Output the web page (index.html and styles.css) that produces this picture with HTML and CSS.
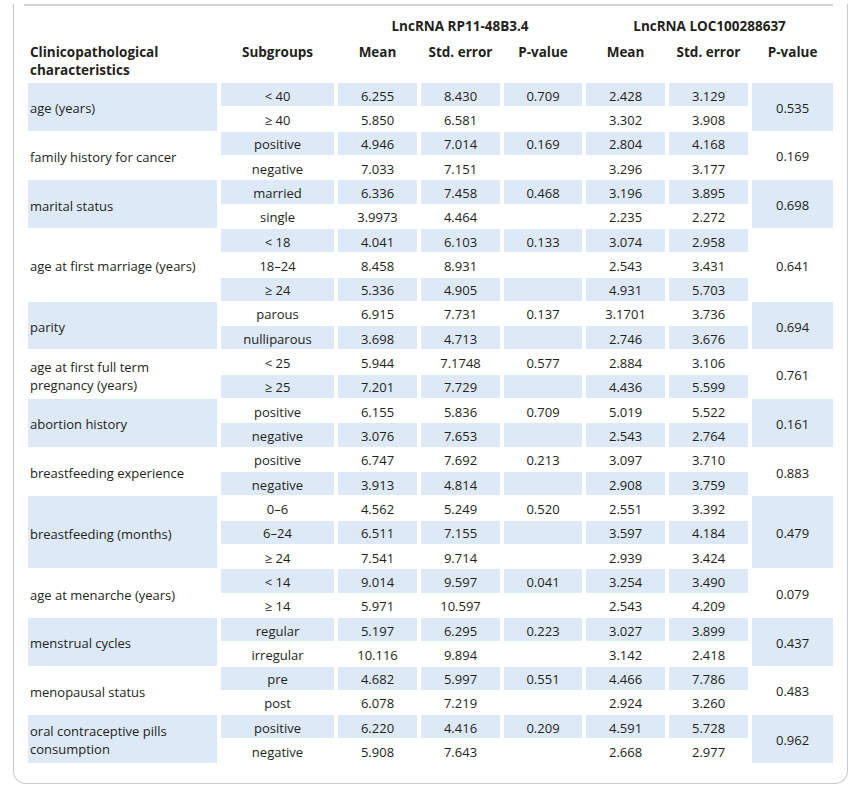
FILE: index.html
```html
<!DOCTYPE html>
<html lang="en">
<head>
    <meta charset="UTF-8">
    <title>Table 2</title>
    <link rel="stylesheet" href="styles.css">
</head>
<body>
    <div class="card">
        <div class="rule"></div>
        <table class="data">
            <colgroup>
                <col class="c-label"><col class="c-sub">
                <col class="c-num"><col class="c-num"><col class="c-num2">
                <col class="c-num"><col class="c-num"><col class="c-last">
            </colgroup>
            <thead>
                <tr class="top">
                    <th></th><th></th>
                    <th colspan="3">LncRNA RP11-48B3.4</th>
                    <th colspan="3">LncRNA LOC100288637</th>
                </tr>
                <tr class="names">
                    <th class="label">Clinicopathological<br>characteristics</th>
                    <th>Subgroups</th>
                    <th>Mean</th><th>Std. error</th><th>P-value</th>
                    <th>Mean</th><th>Std. error</th><th>P-value</th>
                </tr>
            </thead>
            <tbody>
                <!-- age -->
                <tr class="stripe">
                    <td class="label span hl" rowspan="2">age (years)</td>
                    <td>&lt; 40</td><td>6.255</td><td>8.430</td><td>0.709</td><td>2.428</td><td>3.129</td>
                    <td class="span hl" rowspan="2">0.535</td>
                </tr>
                <tr><td>&ge; 40</td><td>5.850</td><td>6.581</td><td></td><td>3.302</td><td>3.908</td></tr>

                <!-- family history -->
                <tr class="stripe">
                    <td class="label span" rowspan="2">family history for cancer</td>
                    <td>positive</td><td>4.946</td><td>7.014</td><td>0.169</td><td>2.804</td><td>4.168</td>
                    <td class="span" rowspan="2">0.169</td>
                </tr>
                <tr><td>negative</td><td>7.033</td><td>7.151</td><td></td><td>3.296</td><td>3.177</td></tr>

                <!-- marital -->
                <tr class="stripe">
                    <td class="label span hl" rowspan="2">marital status</td>
                    <td>married</td><td>6.336</td><td>7.458</td><td>0.468</td><td>3.196</td><td>3.895</td>
                    <td class="span hl" rowspan="2">0.698</td>
                </tr>
                <tr><td>single</td><td>3.9973</td><td>4.464</td><td></td><td>2.235</td><td>2.272</td></tr>

                <!-- first marriage -->
                <tr class="stripe">
                    <td class="label span" rowspan="3">age at first marriage (years)</td>
                    <td>&lt; 18</td><td>4.041</td><td>6.103</td><td>0.133</td><td>3.074</td><td>2.958</td>
                    <td class="span" rowspan="3">0.641</td>
                </tr>
                <tr><td>18&ndash;24</td><td>8.458</td><td>8.931</td><td></td><td>2.543</td><td>3.431</td></tr>
                <tr class="stripe"><td>&ge; 24</td><td>5.336</td><td>4.905</td><td></td><td>4.931</td><td>5.703</td></tr>

                <!-- parity -->
                <tr>
                    <td class="label span hl" rowspan="2">parity</td>
                    <td>parous</td><td>6.915</td><td>7.731</td><td>0.137</td><td>3.1701</td><td>3.736</td>
                    <td class="span hl" rowspan="2">0.694</td>
                </tr>
                <tr class="stripe"><td>nulliparous</td><td>3.698</td><td>4.713</td><td></td><td>2.746</td><td>3.676</td></tr>

                <!-- full term pregnancy -->
                <tr>
                    <td class="label span" rowspan="2">age at first full term<br>pregnancy (years)</td>
                    <td>&lt; 25</td><td>5.944</td><td>7.1748</td><td>0.577</td><td>2.884</td><td>3.106</td>
                    <td class="span" rowspan="2">0.761</td>
                </tr>
                <tr class="stripe"><td>&ge; 25</td><td>7.201</td><td>7.729</td><td></td><td>4.436</td><td>5.599</td></tr>

                <!-- abortion -->
                <tr>
                    <td class="label span hl" rowspan="2">abortion history</td>
                    <td>positive</td><td>6.155</td><td>5.836</td><td>0.709</td><td>5.019</td><td>5.522</td>
                    <td class="span hl" rowspan="2">0.161</td>
                </tr>
                <tr class="stripe"><td>negative</td><td>3.076</td><td>7.653</td><td></td><td>2.543</td><td>2.764</td></tr>

                <!-- breastfeeding experience -->
                <tr>
                    <td class="label span" rowspan="2">breastfeeding experience</td>
                    <td>positive</td><td>6.747</td><td>7.692</td><td>0.213</td><td>3.097</td><td>3.710</td>
                    <td class="span" rowspan="2">0.883</td>
                </tr>
                <tr class="stripe"><td>negative</td><td>3.913</td><td>4.814</td><td></td><td>2.908</td><td>3.759</td></tr>

                <!-- breastfeeding months -->
                <tr>
                    <td class="label span hl" rowspan="3">breastfeeding (months)</td>
                    <td>0&ndash;6</td><td>4.562</td><td>5.249</td><td>0.520</td><td>2.551</td><td>3.392</td>
                    <td class="span hl" rowspan="3">0.479</td>
                </tr>
                <tr class="stripe"><td>6&ndash;24</td><td>6.511</td><td>7.155</td><td></td><td>3.597</td><td>4.184</td></tr>
                <tr><td>&ge; 24</td><td>7.541</td><td>9.714</td><td></td><td>2.939</td><td>3.424</td></tr>

                <!-- menarche -->
                <tr class="stripe">
                    <td class="label span" rowspan="2">age at menarche (years)</td>
                    <td>&lt; 14</td><td>9.014</td><td>9.597</td><td>0.041</td><td>3.254</td><td>3.490</td>
                    <td class="span" rowspan="2">0.079</td>
                </tr>
                <tr><td>&ge; 14</td><td>5.971</td><td>10.597</td><td></td><td>2.543</td><td>4.209</td></tr>

                <!-- menstrual -->
                <tr class="stripe">
                    <td class="label span hl" rowspan="2">menstrual cycles</td>
                    <td>regular</td><td>5.197</td><td>6.295</td><td>0.223</td><td>3.027</td><td>3.899</td>
                    <td class="span hl" rowspan="2">0.437</td>
                </tr>
                <tr><td>irregular</td><td>10.116</td><td>9.894</td><td></td><td>3.142</td><td>2.418</td></tr>

                <!-- menopause -->
                <tr class="stripe">
                    <td class="label span" rowspan="2">menopausal status</td>
                    <td>pre</td><td>4.682</td><td>5.997</td><td>0.551</td><td>4.466</td><td>7.786</td>
                    <td class="span" rowspan="2">0.483</td>
                </tr>
                <tr><td>post</td><td>6.078</td><td>7.219</td><td></td><td>2.924</td><td>3.260</td></tr>

                <!-- oral contraceptive -->
                <tr class="stripe">
                    <td class="label span hl" rowspan="2">oral contraceptive pills<br>consumption</td>
                    <td>positive</td><td>6.220</td><td>4.416</td><td>0.209</td><td>4.591</td><td>5.728</td>
                    <td class="span hl" rowspan="2">0.962</td>
                </tr>
                <tr><td>negative</td><td>5.908</td><td>7.643</td><td></td><td>2.668</td><td>2.977</td></tr>
            </tbody>
        </table>
    </div>
</body>
</html>
```

FILE: styles.css
```css
body {
    margin: 0;
    background: #fff;
    color: #231f20;
    font-family: "Open Sans", "Liberation Sans", sans-serif;
    font-size: 13px;
}

/* Card frame, its top edge is off screen */
.card {
    margin: 0 11px 0 13px;
    padding: 0 10px 19px 10px;
    border: 1px solid #c9c9c9;
    border-top: none;
    border-radius: 0 0 13px 13px;
}
.rule {
    height: 2px;
    margin: 4px 4px 0 0;
    background: #d2d2d2;
}

/* Table */
.data {
    width: 813px;
    table-layout: fixed;
    border-collapse: separate;
    border-spacing: 4px 1px;
}
.c-label { width: 189px; }
.c-sub { width: 113px; }
.c-num { width: 79px; }
.c-num2 { width: 78px; }
.c-last { width: 81px; }

.data th {
    font-size: 13.5px;
    font-weight: 700;
    text-align: center;
    line-height: 18px;
    padding: 0;
}
.data .top th {
    padding: 10px 0 7px;
    vertical-align: middle;
}
.data .names th {
    vertical-align: top;
    padding: 0 0 3px;
}
.data th.label {
    text-align: left;
    padding-left: 2px;
}

.data td {
    text-align: center;
    vertical-align: middle;
    line-height: 17px;
    padding: 4.665px 0 1.665px;
}
.data td.label {
    text-align: left;
    line-height: 18px;
    padding-left: 2px;
}

/* Shading */
.data tr.stripe td:not(.span),
.data td.span.hl {
    background: #dde9f7;
}
```
